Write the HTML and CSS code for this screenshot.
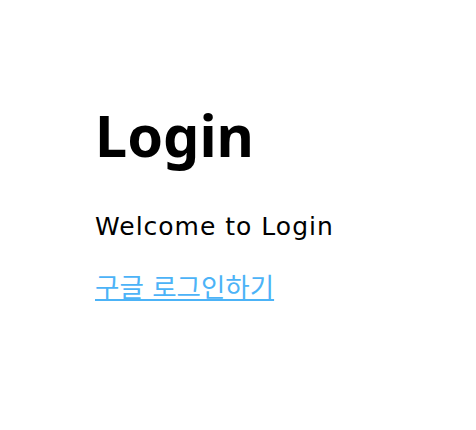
FILE: index.html
```html
<!DOCTYPE html>
<html lang="ko">
<head>
<meta charset="utf-8">
<title>Login</title>
<link rel="stylesheet" href="styles.css">
</head>
<body>
<main class="page">
  <h1 class="title">Login</h1>
  <p class="welcome">Welcome to Login</p>
  <a class="google-link" href="#">구글 로그인하기</a>
</main>
</body>
</html>
```
FILE: styles.css
```css
html, body {
  margin: 0;
  padding: 0;
  background: #ffffff;
}
.page {
  display: flex;
  flex-direction: column;
  align-items: flex-start;
  padding: 107px 0 0 95px;
}
.title {
  margin: 0;
  font-family: "Noto Sans", "DejaVu Sans", sans-serif;
  font-weight: 700;
  font-size: 57.5px;
  line-height: 1;
  color: #000;
}
.welcome {
  margin: 49.5px 0 0 0;
  font-family: "DejaVu Sans", sans-serif;
  font-size: 25px;
  letter-spacing: 1px;
  line-height: 1;
  color: #000;
}
.google-link {
  margin-top: 36px;
  font-family: "DejaVu Sans", "Noto Sans CJK KR", sans-serif;
  font-size: 26.5px;
  line-height: 1;
  color: #4cb3f7;
  text-decoration: underline;
}
```
